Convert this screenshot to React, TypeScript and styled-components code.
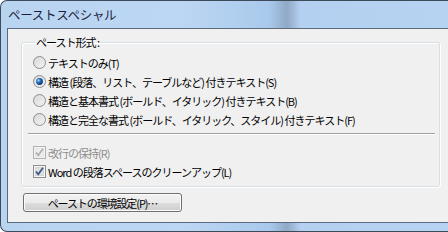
import React from 'react';
import styled, { createGlobalStyle } from 'styled-components';

const GlobalStyle = createGlobalStyle`
  html, body {
    margin: 0;
    padding: 0;
    overflow: hidden;
    background: #ffffff;
  }
`;

const Frame = styled.div`
  width: 448px;
  height: 232px;
  box-sizing: border-box;
  border: 1px solid #3c4a5a;
  border-right: none;
  border-top-left-radius: 7px;
  border-bottom-left-radius: 7px;
  background: linear-gradient(
    90deg,
    #b9d4f1 0%,
    #bcd7f3 40%,
    #a9c9ec 60%,
    #8fa9c6 64%,
    #b4d0f0 67%,
    #b7d3f2 100%
  );
  display: flex;
  flex-direction: column;
  overflow: hidden;
`;

const TitleBar = styled.div`
  height: 27px;
  flex: none;
  display: flex;
  align-items: center;
  padding-left: 7px;
  font-family: "Noto Sans CJK JP", sans-serif;
  font-size: 12.5px;
  letter-spacing: -0.3px;
  color: #1b1f3e;
`;

const Client = styled.div`
  flex: 1;
  margin: 0 0 8px 6px;
  border: 1px solid #5b6a7c;
  border-right: none;
  background: #f0f0f0;
  display: flex;
  flex-direction: column;
  align-items: flex-start;
  font-family: "Noto Sans CJK JP", sans-serif;
  font-size: 11px;
  letter-spacing: -1px;
  color: #000;
`;

const Group = styled.fieldset`
  box-sizing: border-box;
  width: 419px;
  margin: 6px 0 0 13px;
  padding: 4px 4px 5px 11px;
  border: 1px solid #d5dfe5;
  border-radius: 3px;
  box-shadow: inset 1px 1px 0 #ffffff, 1px 1px 0 #ffffff;
`;

const Legend = styled.legend`
  padding: 0 1px;
  margin-left: 2px;
  line-height: 14px;
`;

const Row = styled.div<{ $disabled?: boolean }>`
  height: 19px;
  display: flex;
  align-items: center;
  gap: 2px;
  white-space: nowrap;
  color: ${({ $disabled }) => ($disabled ? '#8d8d8d' : '#000')};
`;

const Separator = styled.div`
  height: 1px;
  margin: 4px 0 9px -5px;
  background: #a0a0a0;
  box-shadow: 0 1px 0 #ffffff;
`;

const Button = styled.div`
  box-sizing: border-box;
  width: 159px;
  height: 19px;
  margin: 6px 0 0 15px;
  border: 1px solid #707070;
  border-radius: 3px;
  background: linear-gradient(#f2f2f2 0%, #ebebeb 50%, #dddddd 51%, #cfcfcf 100%);
  box-shadow: inset 0 0 0 1px #fcfcfc;
  display: flex;
  align-items: center;
  justify-content: center;
  white-space: nowrap;
  letter-spacing: -1.1px;
`;

const Radio = ({ checked }: { checked?: boolean }) => (
  <svg width="13" height="13" viewBox="0 0 13 13">
    <defs>
      <linearGradient id="rb" x1="0" y1="0" x2="1" y2="1">
        <stop offset="0" stopColor="#d0d0d0" />
        <stop offset="1" stopColor="#fbfbfb" />
      </linearGradient>
      <radialGradient id="rd" cx="0.35" cy="0.35" r="0.7">
        <stop offset="0" stopColor="#a9d2f7" />
        <stop offset="0.45" stopColor="#1f6cc0" />
        <stop offset="1" stopColor="#0f3368" />
      </radialGradient>
    </defs>
    <circle cx="6.5" cy="6.5" r="6" fill="url(#rb)" stroke="#8e8f8f" strokeWidth="1" />
    <circle cx="6.5" cy="6.5" r="4.2" fill="none" stroke="#e6e6e6" strokeWidth="1" />
    {checked && <circle cx="6.5" cy="6.5" r="3.4" fill="url(#rd)" />}
  </svg>
);

const Check = ({ disabled }: { disabled?: boolean }) => (
  <svg width="13" height="13" viewBox="0 0 13 13">
    <rect x="0.5" y="0.5" width="12" height="12" fill={disabled ? '#f4f4f4' : '#f6f6f6'} stroke={disabled ? '#b1b1b1' : '#8e8f8f'} />
    <rect x="2.5" y="2.5" width="8" height="8" fill={disabled ? '#eeeeee' : '#e0e0e0'} stroke={disabled ? '#e4e4e4' : '#d4d4d4'} />
    <path
      d="M3 6.5 L5.3 9.3 L10 2.8"
      fill="none"
      stroke={disabled ? '#b0b0b0' : '#3c5a8e'}
      strokeWidth="1.8"
    />
  </svg>
);

const radios = [
  { label: 'テキストのみ(T)', checked: false },
  { label: '構造 (段落、リスト、テーブルなど) 付きテキスト(S)', checked: true },
  { label: '構造と基本書式 (ボールド、イタリック) 付きテキスト(B)', checked: false },
  { label: '構造と完全な書式 (ボールド、イタリック、スタイル) 付きテキスト(F)', checked: false },
];

export default function App() {
  return (
    <>
      <GlobalStyle />
      <Frame>
        <TitleBar>ペーストスペシャル</TitleBar>
        <Client>
          <Group>
            <Legend>ペースト形式 :</Legend>
            {radios.map((r) => (
              <Row key={r.label}>
                <Radio checked={r.checked} />
                <span>{r.label}</span>
              </Row>
            ))}
            <Separator />
            <Row $disabled>
              <Check disabled />
              <span>改行の保持(R)</span>
            </Row>
            <Row>
              <Check />
              <span>Word の段落スペースのクリーンアップ(L)</span>
            </Row>
          </Group>
          <Button>ペーストの環境設定(P)…</Button>
        </Client>
      </Frame>
    </>
  );
}
